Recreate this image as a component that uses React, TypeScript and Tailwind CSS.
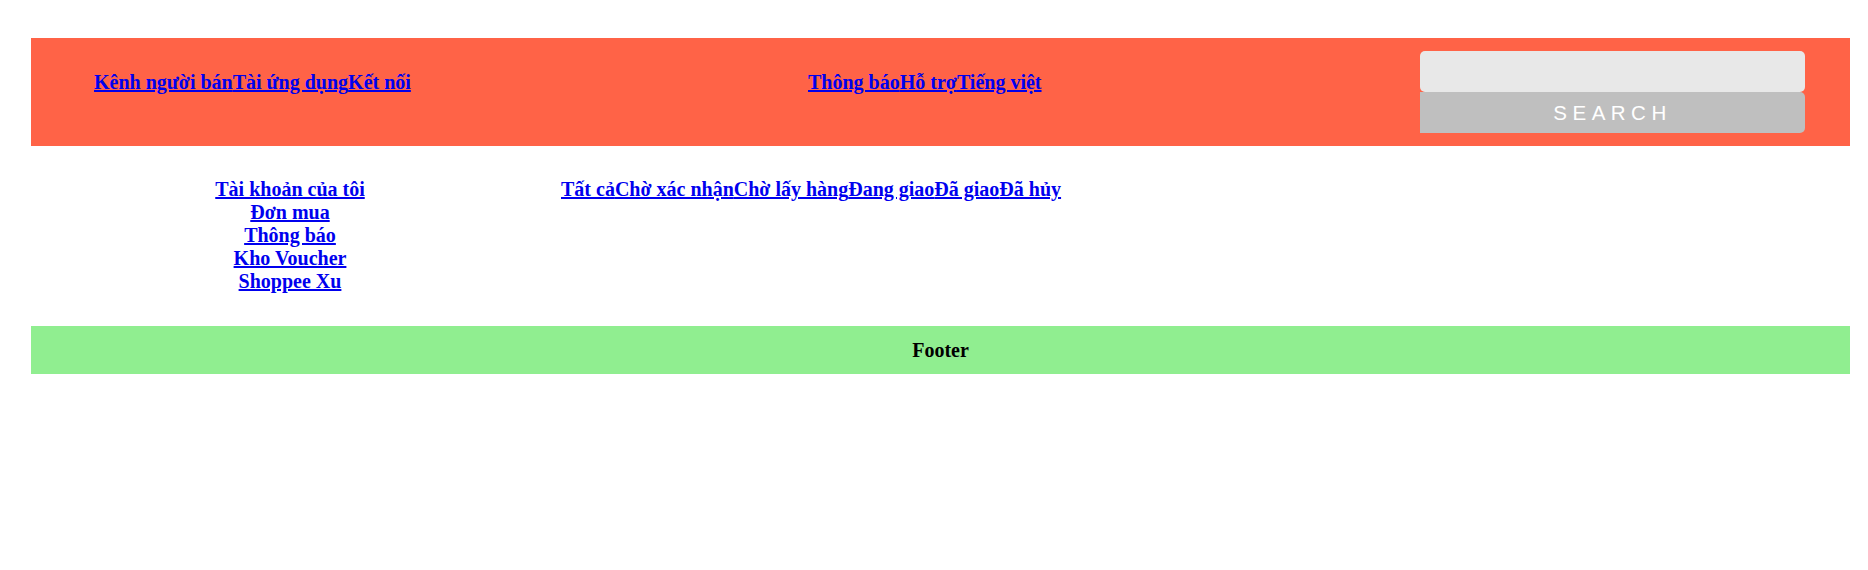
const topLeft = ['Kênh người bán', 'Tài ứng dụng', 'Kết nối']
const topMid = ['Thông báo', 'Hỗ trợ', 'Tiếng việt']
const sideLinks = ['Tài khoản của tôi', 'Đơn mua', 'Thông báo', 'Kho Voucher', 'Shoppee Xu']
const tabs = ['Tất cả', 'Chờ xác nhận', 'Chờ lấy hàng', 'Đang giao', 'Đã giao', 'Đã hủy']

const linkCls = 'text-[#0000ee] underline'

export default function App() {
  return (
    <div className="min-h-[570px] bg-white pt-[38px] font-['Liberation_Serif',serif] text-[20px] leading-[23px] font-bold">
      <div className="ml-[31px] w-[1819px]">
        <header className="flex h-[108px] bg-[#ff6347]">
          <nav className="w-[777px] pt-[33px] pl-[63px]">
            {topLeft.map((t) => (
              <a key={t} href="#" className={linkCls}>
                {t}
              </a>
            ))}
          </nav>
          <nav className="flex-1 pt-[33px]">
            {topMid.map((t) => (
              <a key={t} href="#" className={linkCls}>
                {t}
              </a>
            ))}
          </nav>
          <form className="mt-[13px] mr-[45px] flex w-[385px] flex-col">
            <input
              type="text"
              className="h-[41px] w-full rounded-[5px] bg-[#e8e8e8] px-3 font-['Liberation_Sans',sans-serif] text-base font-normal outline-none"
            />
            <button
              type="button"
              className="h-[41px] w-full rounded-r-[5px] bg-[#bfbfbf] font-['Liberation_Sans',sans-serif] text-[20.5px] font-normal tracking-[5.5px] text-white"
            >
              SEARCH
            </button>
          </form>
        </header>

        <main className="flex pt-[32px] pb-[33px]">
          <aside className="flex w-[518px] flex-col items-center">
            {sideLinks.map((t) => (
              <a key={t} href="#" className={linkCls}>
                {t}
              </a>
            ))}
          </aside>
          <div className="ml-[12px]">
            {tabs.map((t) => (
              <a key={t} href="#" className={linkCls}>
                {t}
              </a>
            ))}
          </div>
        </main>

        <footer className="flex h-[48px] items-center justify-center bg-[#90ee90] text-black">
          Footer
        </footer>
      </div>
    </div>
  )
}
